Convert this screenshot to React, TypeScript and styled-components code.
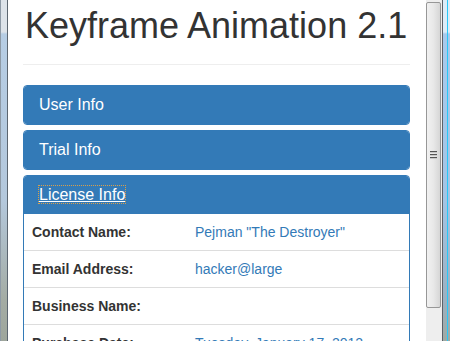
import React from 'react';
import styled, { createGlobalStyle } from 'styled-components';

const GlobalStyle = createGlobalStyle`
  html, body {
    margin: 0;
    padding: 0;
    background: #ffffff;
    overflow: hidden;
  }
  body {
    font-family: "Liberation Sans", Arial, sans-serif;
    color: #333333;
  }
`;

const Window = styled.div`
  display: flex;
  width: 450px;
  height: 341px;
  overflow: hidden;
`;

const LeftFrame = styled.div`
  width: 8px;
  flex-shrink: 0;
  border-left: 1px solid #8e9aa6;
  border-right: 1px solid #5c6670;
  box-sizing: border-box;
  background: linear-gradient(
    to bottom,
    #dde3e9 0px,
    #dde3e9 32px,
    #b6cde4 34px,
    #b4c8dc 200px,
    #a4aca4 300px,
    #9ea69c 341px
  );
`;

const Content = styled.div`
  flex: 1;
  min-width: 0;
  padding: 0 16px 0 15px;
  overflow: hidden;
`;

const PageHeader = styled.div`
  padding: 6px 0 18px;
  border-bottom: 1px solid #eeeeee;
  margin: 0 0 20px;
`;

const Title = styled.h1`
  margin: 0;
  padding-left: 2px;
  font-size: 36px;
  font-weight: 400;
  line-height: 1.1;
  white-space: nowrap;
  color: #333333;
`;

const PanelGroup = styled.div`
  display: flex;
  flex-direction: column;
  gap: 5px;
`;

const Panel = styled.div`
  border: 1px solid #337ab7;
  border-radius: 4px;
  background: #ffffff;
  overflow: hidden;
`;

const PanelHeading = styled.div`
  background: #337ab7;
  color: #ffffff;
  padding: 10px 15px;
`;

const PanelTitle = styled.a<{ $focused?: boolean }>`
  display: inline-block;
  font-size: 16px;
  line-height: 1.1;
  color: #ffffff;
  text-decoration: ${p => (p.$focused ? 'underline' : 'none')};
  outline: ${p => (p.$focused ? '1px dotted #d9a04a' : 'none')};
  outline-offset: 0;
`;

const InfoTable = styled.table`
  width: 100%;
  border-collapse: collapse;
  font-size: 14px;
  line-height: 20px;
`;

const Row = styled.tr`
  & + & td {
    border-top: 1px solid #dddddd;
  }
`;

const LabelCell = styled.td`
  width: 147px;
  padding: 8px;
  font-weight: 700;
  color: #333333;
  white-space: nowrap;
`;

const ValueCell = styled.td`
  padding: 8px;
  color: #337ab7;
  white-space: nowrap;
`;

const ScrollTrack = styled.div`
  width: 17px;
  flex-shrink: 0;
  box-sizing: border-box;
  background: #eeeeee;
  border-right: 1px solid #5a6068;
  padding: 2px 1px 0 0;
`;

const ScrollThumb = styled.div`
  height: 306px;
  box-sizing: border-box;
  border: 1px solid #979797;
  border-radius: 2px;
  background: linear-gradient(to right, #f1f1f1 0%, #e8e8e8 50%, #d6d6d6 100%);
  display: flex;
  align-items: center;
  justify-content: center;
`;

const Grip = styled.div`
  display: flex;
  flex-direction: column;
  gap: 1px;

  span {
    display: block;
    width: 7px;
    height: 1px;
    background: #555555;
    border-bottom: 1px solid #c8c8c8;
  }
`;

const RightFrame = styled.div`
  width: 7px;
  flex-shrink: 0;
  display: flex;
  background: linear-gradient(
    to bottom,
    #dcecf8 0px,
    #dcecf8 32px,
    #a8caec 34px,
    #a4c4e4 200px,
    #9cb0c0 300px,
    #a0aaa4 341px
  );
`;

const FrameGlow = styled.div`
  margin-left: 4px;
  width: 1px;
  background: #28c8f8;
`;

const rows = [
  { label: 'Contact Name:', value: 'Pejman "The Destroyer"' },
  { label: 'Email Address:', value: 'hacker@large' },
  { label: 'Business Name:', value: '' },
  { label: 'Purchase Date:', value: 'Tuesday, January 17, 2012' },
];

const App: React.FC = () => {
  return (
    <Window>
      <GlobalStyle />
      <LeftFrame />
      <Content>
        <PageHeader>
          <Title>Keyframe Animation 2.1</Title>
        </PageHeader>
        <PanelGroup>
          <Panel>
            <PanelHeading>
              <PanelTitle>User Info</PanelTitle>
            </PanelHeading>
          </Panel>
          <Panel>
            <PanelHeading>
              <PanelTitle>Trial Info</PanelTitle>
            </PanelHeading>
          </Panel>
          <Panel>
            <PanelHeading>
              <PanelTitle $focused>License Info</PanelTitle>
            </PanelHeading>
            <InfoTable>
              <tbody>
                {rows.map(row => (
                  <Row key={row.label}>
                    <LabelCell>{row.label}</LabelCell>
                    <ValueCell>{row.value}</ValueCell>
                  </Row>
                ))}
              </tbody>
            </InfoTable>
          </Panel>
        </PanelGroup>
      </Content>
      <ScrollTrack>
        <ScrollThumb>
          <Grip>
            <span />
            <span />
            <span />
          </Grip>
        </ScrollThumb>
      </ScrollTrack>
      <RightFrame>
        <FrameGlow />
      </RightFrame>
    </Window>
  );
};

export default App;
